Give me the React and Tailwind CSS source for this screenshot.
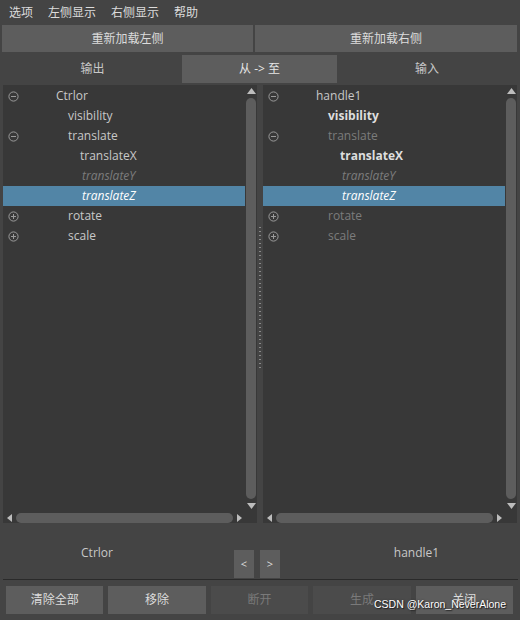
import React from "react";

const font = { fontFamily: '"Open Sans","Noto Sans CJK SC",sans-serif' };

function Toggle({ open }) {
  return (
    <svg width="11" height="11" viewBox="0 0 11 11" className="shrink-0">
      <circle cx="5.5" cy="5.5" r="4.6" fill="none" stroke="#9a9a9a" strokeWidth="1" />
      <line x1="3" y1="5.5" x2="8" y2="5.5" stroke="#9a9a9a" strokeWidth="1" />
      {!open && <line x1="5.5" y1="3" x2="5.5" y2="8" stroke="#9a9a9a" strokeWidth="1" />}
    </svg>
  );
}

const indents = ["pl-[37px]", "pl-[49px]", "pl-[61px]"];

function Row({ row }) {
  const tone = row.selected
    ? "bg-[#5285a6] text-white italic"
    : row.italic
    ? "text-[#7c7c7c] italic"
    : row.bold
    ? "text-[#dedede] font-bold"
    : row.dim
    ? "text-[#7c7c7c]"
    : "text-[#c8c8c8]";
  return (
    <div className={`h-[20px] flex items-center pl-[5px] text-[12px] ${tone}`}>
      <div className="w-[11px] flex items-center">
        {row.toggle && <Toggle open={row.toggle === "open"} />}
      </div>
      <span className={`${indents[row.level]} ${row.italic || row.selected ? "ml-[2px]" : ""} leading-none`}>{row.label}</span>
    </div>
  );
}

function TreeList({ rows }) {
  return (
    <div className="flex-1 flex flex-col bg-[#383838]">
      <div className="flex-1 flex min-h-0">
        <div className="flex-1 pt-[1px]">
          {rows.map((r) => (
            <Row key={r.label + r.level} row={r} />
          ))}
        </div>
        <div className="w-[12px] flex flex-col items-center pt-[3px] pb-[3px]">
          <svg width="9" height="6" viewBox="0 0 9 6"><polygon points="4.5,0 9,6 0,6" fill="#bdbdbd" /></svg>
          <div className="flex-1 w-[10px] my-[4px] rounded-full bg-[#5d5d5d]" />
          <svg width="9" height="6" viewBox="0 0 9 6"><polygon points="0,0 9,0 4.5,6" fill="#bdbdbd" /></svg>
        </div>
      </div>
      <div className="h-[11px] flex">
        <div className="flex-1 flex items-center pl-[4px] pr-[3px]">
          <svg width="5" height="8" viewBox="0 0 5 8"><polygon points="5,0 5,8 0,4" fill="#bdbdbd" /></svg>
          <div className="flex-1 h-[10px] mx-[4px] rounded-full bg-[#5d5d5d]" />
          <svg width="5" height="8" viewBox="0 0 5 8"><polygon points="0,0 0,8 5,4" fill="#bdbdbd" /></svg>
        </div>
        <div className="w-[12px]" />
      </div>
    </div>
  );
}

const leftRows = [
  { label: "Ctrlor", level: 0, toggle: "open" },
  { label: "visibility", level: 1 },
  { label: "translate", level: 1, toggle: "open" },
  { label: "translateX", level: 2 },
  { label: "translateY", level: 2, italic: true },
  { label: "translateZ", level: 2, selected: true },
  { label: "rotate", level: 1, toggle: "closed" },
  { label: "scale", level: 1, toggle: "closed" },
];

const rightRows = [
  { label: "handle1", level: 0, toggle: "open" },
  { label: "visibility", level: 1, bold: true },
  { label: "translate", level: 1, toggle: "open", dim: true },
  { label: "translateX", level: 2, bold: true },
  { label: "translateY", level: 2, italic: true },
  { label: "translateZ", level: 2, selected: true },
  { label: "rotate", level: 1, toggle: "closed", dim: true },
  { label: "scale", level: 1, toggle: "closed", dim: true },
];

function Btn({ children, disabled }) {
  return (
    <div
      className={`flex-1 h-[28px] flex items-center justify-center text-[12px] ${
        disabled ? "bg-[#4b4b4b] text-[#7a7a7a]" : "bg-[#5d5d5d] text-[#dcdcdc]"
      }`}
    >
      {children}
    </div>
  );
}

export default function App() {
  return (
    <div className="relative w-[520px] h-[620px] bg-[#444444] flex flex-col overflow-hidden" style={font}>
      {/* menu */}
      <div className="h-[25px] flex items-center px-[9px] gap-[15px] text-[12px] text-[#dcdcdc]">
        <span>选项</span>
        <span>左侧显示</span>
        <span>右侧显示</span>
        <span>帮助</span>
      </div>

      {/* reload buttons */}
      <div className="h-[27px] flex gap-[2px] pl-[2px] pr-[3px]">
        <div className="w-[251px] bg-[#5d5d5d] flex items-center justify-center text-[12px] text-[#dcdcdc]">重新加载左侧</div>
        <div className="flex-1 bg-[#5d5d5d] flex items-center justify-center text-[12px] text-[#dcdcdc]">重新加载右侧</div>
      </div>

      {/* tabs */}
      <div className="h-[28px] mt-[3px] flex pl-[3px] pr-[3px] text-[12px]">
        <div className="w-[179px] flex items-center justify-center text-[#c8c8c8]">输出</div>
        <div className="w-[155px] bg-[#5d5d5d] flex items-center justify-center text-[#e6e6e6]">从 -&gt; 至</div>
        <div className="flex-1 flex items-center justify-center text-[#c8c8c8]">输入</div>
      </div>

      {/* lists */}
      <div className="h-[438px] mt-[2px] flex pl-[3px] pr-[3px]">
        <TreeList rows={leftRows} />
        <div className="w-[6px] flex flex-col items-center justify-center gap-[3px] pb-[14px]">
          {Array.from({ length: 36 }).map((_, i) => (
            <div key={i} className="w-[2px] h-[1px] bg-[#8a8a8a]" />
          ))}
        </div>
        <TreeList rows={rightRows} />
      </div>

      {/* labels + arrows */}
      <div className="h-[56px] flex items-end pb-[1px]">
        <div className="w-[194px] self-start mt-[21px] text-center text-[12px] text-[#c8c8c8]">Ctrlor</div>
        <div className="w-[40px]" />
        <div className="flex gap-[6px]">
          <div className="w-[20px] h-[28px] bg-[#5d5d5d] flex items-center justify-center text-[11px] text-[#dcdcdc]">&lt;</div>
          <div className="w-[20px] h-[28px] bg-[#5d5d5d] flex items-center justify-center text-[11px] text-[#dcdcdc]">&gt;</div>
        </div>
        <div className="w-[33px]" />
        <div className="flex-1 self-start mt-[21px] text-center text-[12px] text-[#c8c8c8]">handle1</div>
      </div>

      <div className="h-[1px] mx-[3px] mr-[2px] bg-[#2a2a2a]" />

      {/* bottom buttons */}
      <div className="flex gap-[5px] pl-[6px] pr-[7px] mt-[6px]">
        <Btn>清除全部</Btn>
        <Btn>移除</Btn>
        <Btn disabled>断开</Btn>
        <Btn disabled>生成</Btn>
        <Btn>关闭</Btn>
      </div>

      <div
        className="absolute left-[374px] top-[597px] text-[10.5px] text-white whitespace-nowrap"
        style={{ fontFamily: '"Liberation Sans",sans-serif', textShadow: "1px 1px 1px #222, 0 0 2px #333" }}
      >
        CSDN @Karon_NeverAlone
      </div>
    </div>
  );
}
